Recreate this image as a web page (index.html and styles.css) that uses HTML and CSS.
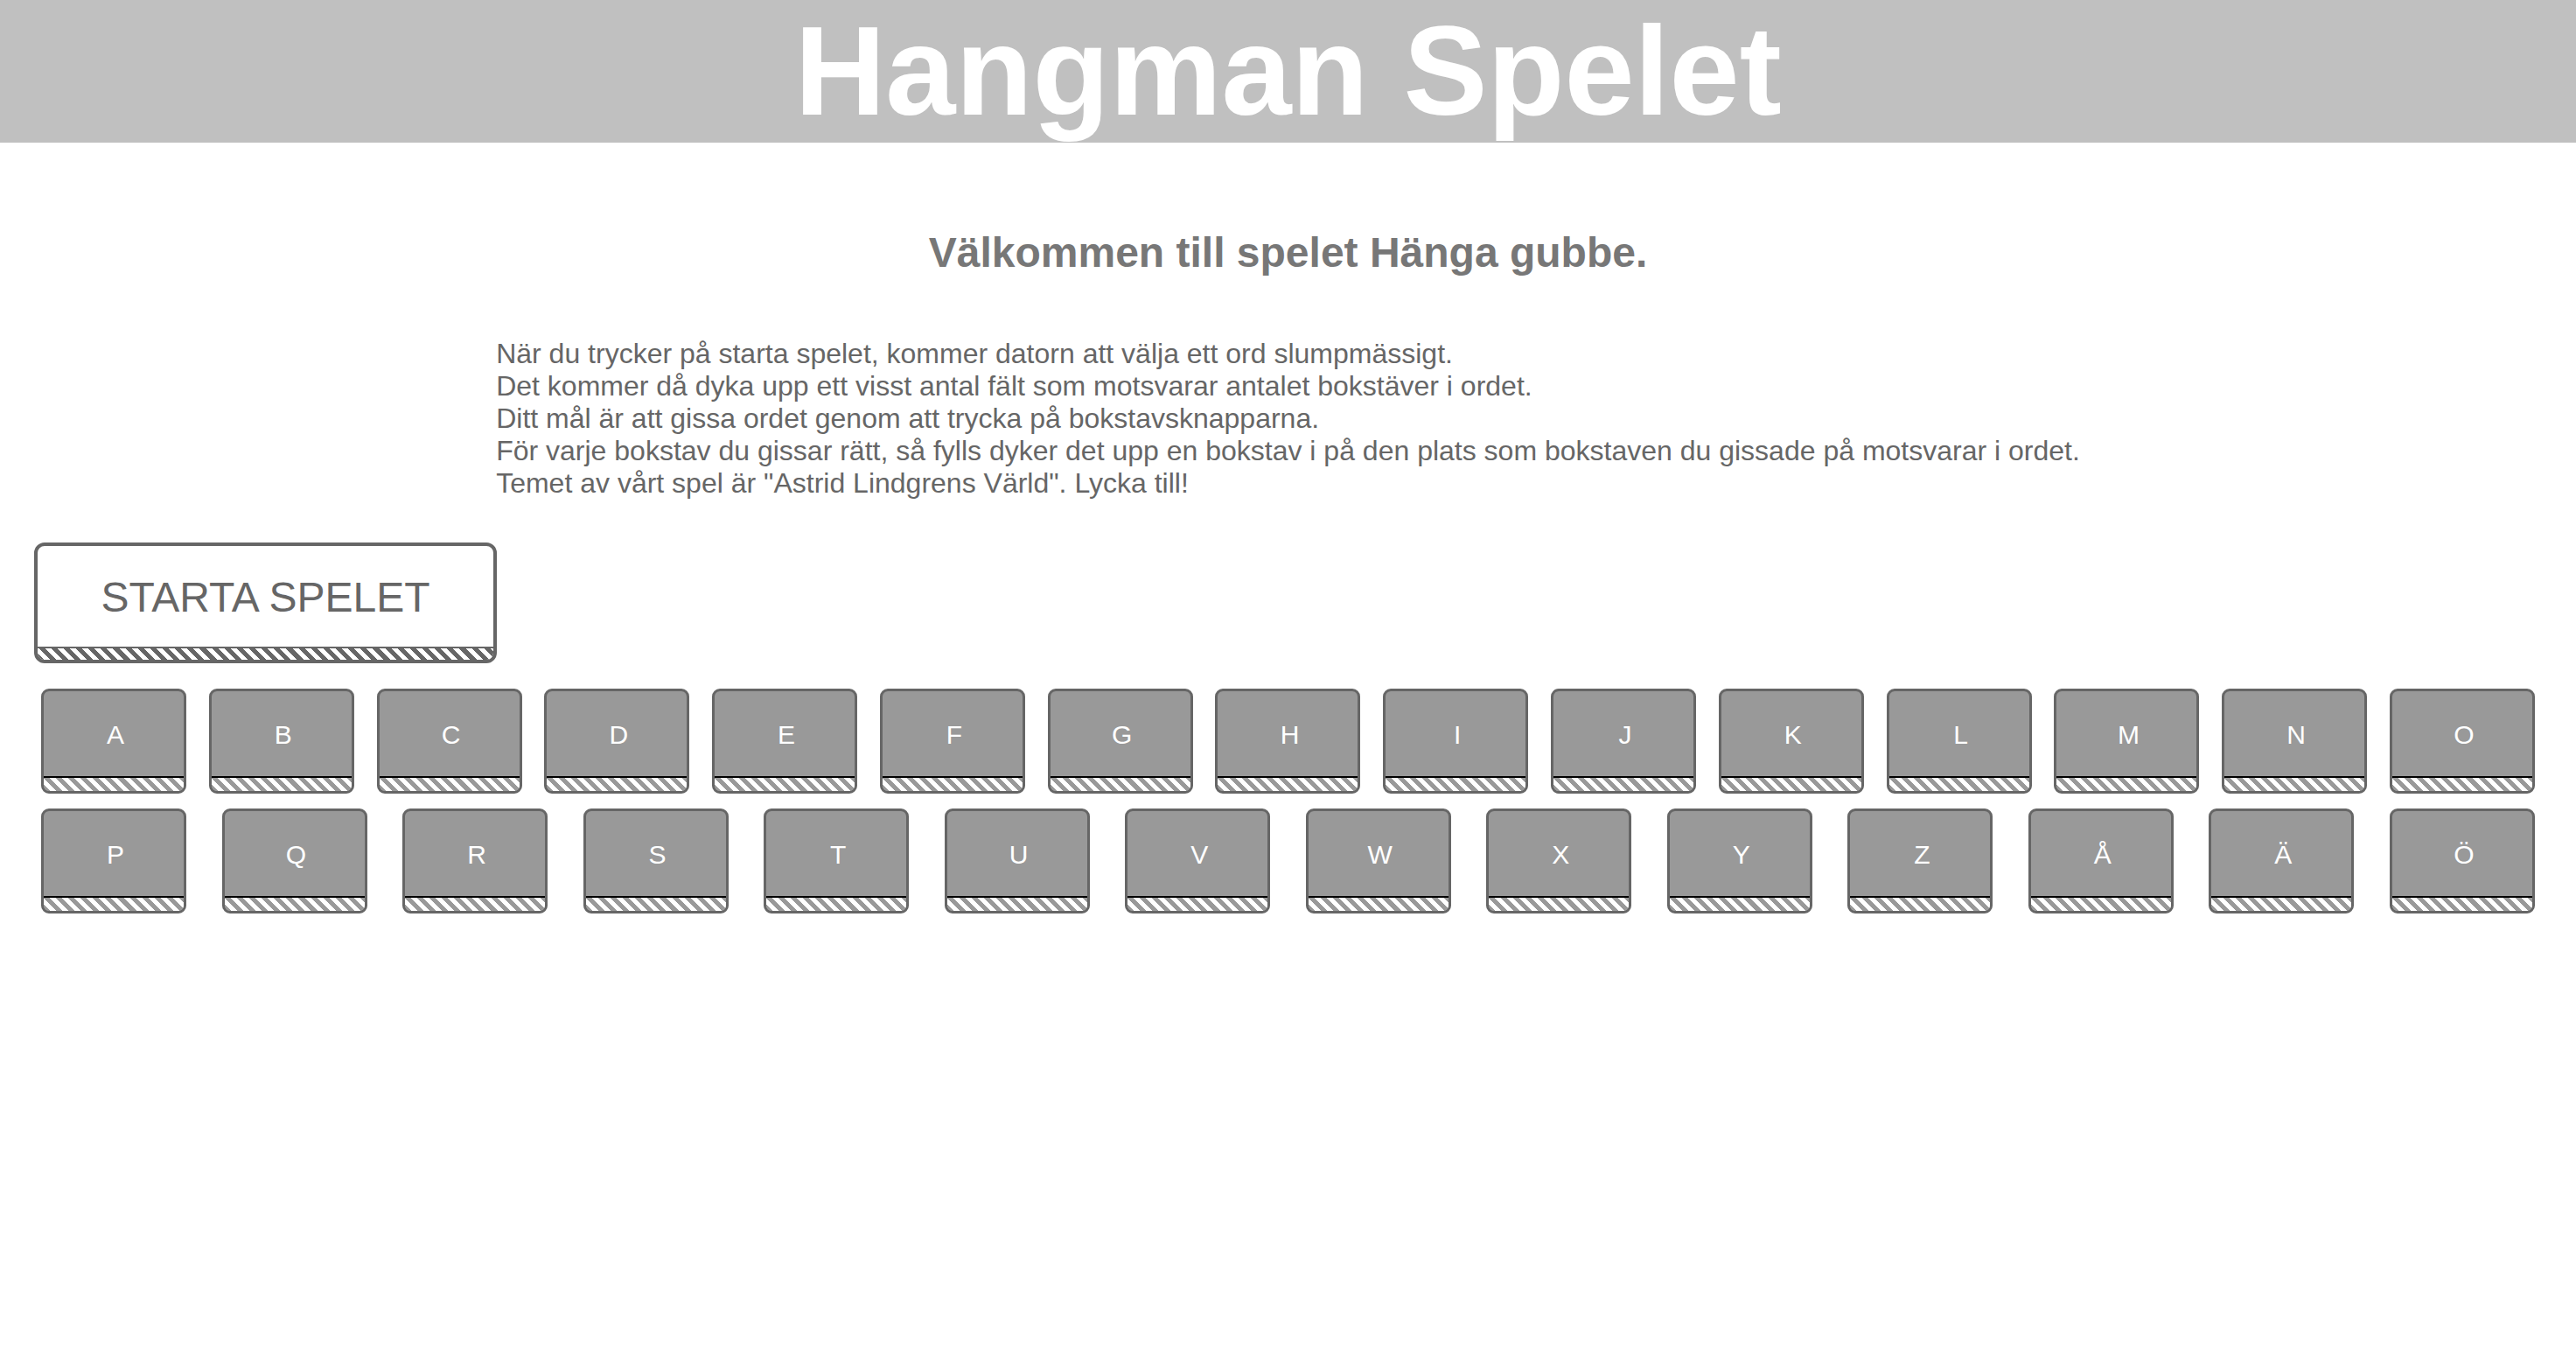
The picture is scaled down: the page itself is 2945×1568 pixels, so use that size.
FILE: index.html
```html
<!DOCTYPE html>
<html lang="sv">
<head>
<meta charset="utf-8">
<title>Hangman Spelet</title>
<link rel="stylesheet" href="styles.css">
</head>
<body>
<header class="site-header">
  <h1 class="site-title">Hangman Spelet</h1>
</header>
<main class="main">
  <h2 class="welcome">Välkommen till spelet Hänga gubbe.</h2>
  <p class="intro">När du trycker på starta spelet, kommer datorn att välja ett ord slumpmässigt.<br>Det kommer då dyka upp ett visst antal fält som motsvarar antalet bokstäver i ordet.<br>Ditt mål är att gissa ordet genom att trycka på bokstavsknapparna.<br>För varje bokstav du gissar rätt, så fylls dyker det upp en bokstav i på den plats som bokstaven du gissade på motsvarar i ordet.<br>Temet av vårt spel är "Astrid Lindgrens Värld". Lycka till!</p>
  <button class="start-btn" type="button"><span class="start-label">STARTA SPELET</span><span class="start-stripes"></span></button>
  <div class="letter-row row-one">
    <button class="letter" type="button"><span class="letter-label">A</span><span class="letter-stripes"></span></button>
    <button class="letter" type="button"><span class="letter-label">B</span><span class="letter-stripes"></span></button>
    <button class="letter" type="button"><span class="letter-label">C</span><span class="letter-stripes"></span></button>
    <button class="letter" type="button"><span class="letter-label">D</span><span class="letter-stripes"></span></button>
    <button class="letter" type="button"><span class="letter-label">E</span><span class="letter-stripes"></span></button>
    <button class="letter" type="button"><span class="letter-label">F</span><span class="letter-stripes"></span></button>
    <button class="letter" type="button"><span class="letter-label">G</span><span class="letter-stripes"></span></button>
    <button class="letter" type="button"><span class="letter-label">H</span><span class="letter-stripes"></span></button>
    <button class="letter" type="button"><span class="letter-label">I</span><span class="letter-stripes"></span></button>
    <button class="letter" type="button"><span class="letter-label">J</span><span class="letter-stripes"></span></button>
    <button class="letter" type="button"><span class="letter-label">K</span><span class="letter-stripes"></span></button>
    <button class="letter" type="button"><span class="letter-label">L</span><span class="letter-stripes"></span></button>
    <button class="letter" type="button"><span class="letter-label">M</span><span class="letter-stripes"></span></button>
    <button class="letter" type="button"><span class="letter-label">N</span><span class="letter-stripes"></span></button>
    <button class="letter" type="button"><span class="letter-label">O</span><span class="letter-stripes"></span></button>
  </div>
  <div class="letter-row row-two">
    <button class="letter" type="button"><span class="letter-label">P</span><span class="letter-stripes"></span></button>
    <button class="letter" type="button"><span class="letter-label">Q</span><span class="letter-stripes"></span></button>
    <button class="letter" type="button"><span class="letter-label">R</span><span class="letter-stripes"></span></button>
    <button class="letter" type="button"><span class="letter-label">S</span><span class="letter-stripes"></span></button>
    <button class="letter" type="button"><span class="letter-label">T</span><span class="letter-stripes"></span></button>
    <button class="letter" type="button"><span class="letter-label">U</span><span class="letter-stripes"></span></button>
    <button class="letter" type="button"><span class="letter-label">V</span><span class="letter-stripes"></span></button>
    <button class="letter" type="button"><span class="letter-label">W</span><span class="letter-stripes"></span></button>
    <button class="letter" type="button"><span class="letter-label">X</span><span class="letter-stripes"></span></button>
    <button class="letter" type="button"><span class="letter-label">Y</span><span class="letter-stripes"></span></button>
    <button class="letter" type="button"><span class="letter-label">Z</span><span class="letter-stripes"></span></button>
    <button class="letter" type="button"><span class="letter-label">Å</span><span class="letter-stripes"></span></button>
    <button class="letter" type="button"><span class="letter-label">Ä</span><span class="letter-stripes"></span></button>
    <button class="letter" type="button"><span class="letter-label">Ö</span><span class="letter-stripes"></span></button>
  </div>
</main>
</body>
</html>
```

FILE: styles.css
```css
html, body {
  margin: 0;
  padding: 0;
  background: #ffffff;
  font-family: "Liberation Sans", Arial, sans-serif;
}

.site-header {
  background: #c0c0c0;
  height: 163px;
  overflow: hidden;
}

.site-title {
  margin: 0;
  font-size: 144px;
  font-weight: bold;
  line-height: 164px;
  color: #ffffff;
  text-align: center;
}

.main {
  display: flex;
  flex-direction: column;
}

.welcome {
  margin: 97px 0 0 0;
  font-size: 48px;
  font-weight: bold;
  color: #777777;
  text-align: center;
  line-height: 57px;
}

.intro {
  align-self: center;
  margin: 69px 0 0 0;
  font-size: 32px;
  line-height: normal;
  color: #666666;
  text-align: left;
}

.start-btn {
  align-self: flex-start;
  margin: 49px 0 0 39px;
  width: 529px;
  height: 138px;
  padding: 0;
  border: 4px solid #666666;
  border-radius: 12px;
  background: #ffffff;
  display: flex;
  flex-direction: column;
  overflow: hidden;
  font-family: "Liberation Sans", Arial, sans-serif;
  cursor: pointer;
}

.start-label {
  flex: 1;
  display: flex;
  align-items: center;
  justify-content: center;
  font-size: 48px;
  color: #666666;
  padding-top: 1px;
}

.start-stripes {
  display: block;
  width: 100%;
  height: 13px;
  border-top: 2px solid #666666;
  background: repeating-linear-gradient(45deg, #666666 0 5px, #ffffff 5px 10px);
}

.letter-row {
  display: flex;
  justify-content: space-between;
  padding: 0 47px;
}

.row-one {
  margin-top: 29px;
}

.row-two {
  margin-top: 17px;
}

.letter {
  width: 166px;
  height: 120px;
  padding: 0;
  border: 3px solid #666666;
  border-radius: 9px;
  background: #999999;
  display: flex;
  flex-direction: column;
  overflow: hidden;
  font-family: "Liberation Sans", Arial, sans-serif;
  cursor: pointer;
}

.letter-label {
  flex: 1;
  display: flex;
  align-items: center;
  justify-content: center;
  font-size: 30px;
  color: #ffffff;
  padding: 2px 0 0 4px;
}

.letter-stripes {
  display: block;
  width: 100%;
  height: 15px;
  border-top: 2px solid #000000;
  background: repeating-linear-gradient(45deg, #999999 0 5px, #ffffff 5px 10px);
}
```
